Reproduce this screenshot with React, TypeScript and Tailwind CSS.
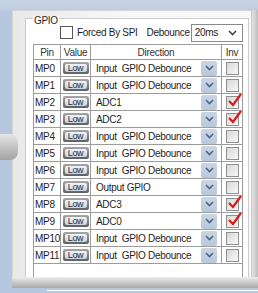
import type { ReactNode } from 'react'

type Row = { pin: string; dir: string; inv: boolean }

const ROWS: Row[] = [
  { pin: 'MP0', dir: 'Input  GPIO Debounce', inv: false },
  { pin: 'MP1', dir: 'Input  GPIO Debounce', inv: false },
  { pin: 'MP2', dir: 'ADC1', inv: true },
  { pin: 'MP3', dir: 'ADC2', inv: true },
  { pin: 'MP4', dir: 'Input  GPIO Debounce', inv: false },
  { pin: 'MP5', dir: 'Input  GPIO Debounce', inv: false },
  { pin: 'MP6', dir: 'Input  GPIO Debounce', inv: false },
  { pin: 'MP7', dir: 'Output GPIO', inv: false },
  { pin: 'MP8', dir: 'ADC3', inv: true },
  { pin: 'MP9', dir: 'ADC0', inv: true },
  { pin: 'MP10', dir: 'Input  GPIO Debounce', inv: false },
  { pin: 'MP11', dir: 'Input  GPIO Debounce', inv: false },
]

function Chevron({ color = '#4f6582' }: { color?: string }) {
  return (
    <svg width="9" height="6" viewBox="0 0 9 6">
      <path d="M1 1 L4.5 4.5 L8 1" fill="none" stroke={color} strokeWidth="1.6" />
    </svg>
  )
}

function LowButton() {
  return (
    <span className="flex w-[26px] h-[12px] rounded-[2px] bg-gradient-to-b from-[#a8a8a8] to-[#5f5f5f] p-[2px]">
      <span className="flex-1 flex items-center justify-center rounded-[2px] bg-gradient-to-b from-[#f2f5f9] to-[#c6d2df] text-[9px] leading-none text-[#1d2c48]">
        Low
      </span>
    </span>
  )
}

function InvBox({ checked }: { checked: boolean }) {
  return (
    <span className="relative block w-[13px] h-[13px] border border-[#8e8f8f] bg-gradient-to-br from-[#d8d8d8] to-[#f8f8f8]">
      {checked && (
        <svg className="absolute left-[1px] top-[-4px]" width="14" height="15" viewBox="0 0 14 15">
          <path d="M1 8 L5 12 L13 1" fill="none" stroke="#e01818" strokeWidth="2.2" />
        </svg>
      )}
    </span>
  )
}

function Cell({ w, children, last, className = '' }: { w: string; children?: ReactNode; last?: boolean; className?: string }) {
  return (
    <div className={`${w} shrink-0 ${last ? '' : 'border-r border-[#9c9c9c]'} flex items-center ${className}`}>
      {children}
    </div>
  )
}

export default function App() {
  return (
    <div className="relative w-[258px] h-[293px] overflow-hidden bg-[#b5c8e0] font-['Liberation_Sans',Arial,sans-serif] text-[10px] tracking-[-0.3px] text-[#1e1e1e]">
      <div className="h-[10px] bg-gradient-to-b from-[#c8d4e4] to-[#c0cde0]" />

      <div className="flex pl-[12px]">
        <div className="flex flex-col w-[246px] h-[278px]">
          <div className="flex flex-1 min-h-0">
            {/* panel body */}
            <div className="flex-1 flex flex-col bg-gradient-to-r from-[#e9e9e9] via-[#f8f8f8] to-[#f8f8f8] border-l border-t border-[#d6d6d6] pl-[12px] pr-[2px] pt-[7px]">
              {/* group box */}
              <div className="relative flex-1 flex flex-col border-l border-t border-r border-[#cdcdcd] bg-white pl-[7px] pr-[5px]">
                <span className="absolute left-[7px] top-[-3px] bg-white px-px leading-none">GPIO</span>

                <div className="flex items-center h-[24px] pt-[3px] whitespace-nowrap">
                  <span className="ml-[27px] w-[13px] h-[13px] shrink-0 border border-[#555] bg-white" />
                  <span className="ml-[4px]">Forced By SPI</span>
                  <span className="ml-[9px]">Debounce</span>
                  <div className="ml-[1px] w-[52px] h-[18px] shrink-0 border border-[#8a8a8a] bg-white flex items-center pl-[3px] pr-[5px]">
                    <span className="flex-1">20ms</span>
                    <Chevron color="#444" />
                  </div>
                </div>

                {/* table */}
                <div className="mt-[1px] flex-1 flex flex-col w-[210px] border-l border-t border-r border-[#9c9c9c] bg-white">
                  <div className="flex h-[15px] border-b border-[#9c9c9c] text-[#333]">
                    <Cell w="w-[27px]" className="justify-center">Pin</Cell>
                    <Cell w="w-[30px]" className="justify-center">Value</Cell>
                    <Cell w="w-[131px]" className="justify-center">Direction</Cell>
                    <Cell w="flex-1" last className="justify-center">Inv</Cell>
                  </div>
                  {ROWS.map(r => (
                    <div key={r.pin} className="flex h-[17px] border-b border-[#9c9c9c]">
                      <Cell w="w-[27px]" className="pl-px whitespace-nowrap">{r.pin}</Cell>
                      <Cell w="w-[30px]" className="justify-center">
                        <LowButton />
                      </Cell>
                      <Cell w="w-[131px]" className="pl-[5px] pr-[4px]">
                        <span className="flex-1 whitespace-pre">{r.dir}</span>
                        <span className="w-[16px] h-[15px] shrink-0 rounded-[2px] bg-gradient-to-b from-[#c9d5e3] to-[#b9c8da] flex items-center justify-center">
                          <Chevron />
                        </span>
                      </Cell>
                      <Cell w="flex-1" last className="justify-center">
                        <InvBox checked={r.inv} />
                      </Cell>
                    </div>
                  ))}
                </div>
              </div>
            </div>
            {/* right bevel */}
            <div className="w-[10px] bg-gradient-to-r from-[#e4e4e4] to-[#bdbdbd] border-l border-[#c8c8c8]" />
          </div>
          {/* bottom bevel */}
          <div className="h-[11px] bg-gradient-to-b from-[#ededed] to-[#a8a8a8]" />
        </div>
      </div>

      <div className="ml-[47px] mt-[2px] h-px bg-white" />

      {/* left slide knob */}
      <div className="absolute left-0 top-[134px] w-[18px] h-[26px] rounded-r-[8px] bg-gradient-to-b from-[#e6e6e6] to-[#a4a4a4]" />
    </div>
  )
}
